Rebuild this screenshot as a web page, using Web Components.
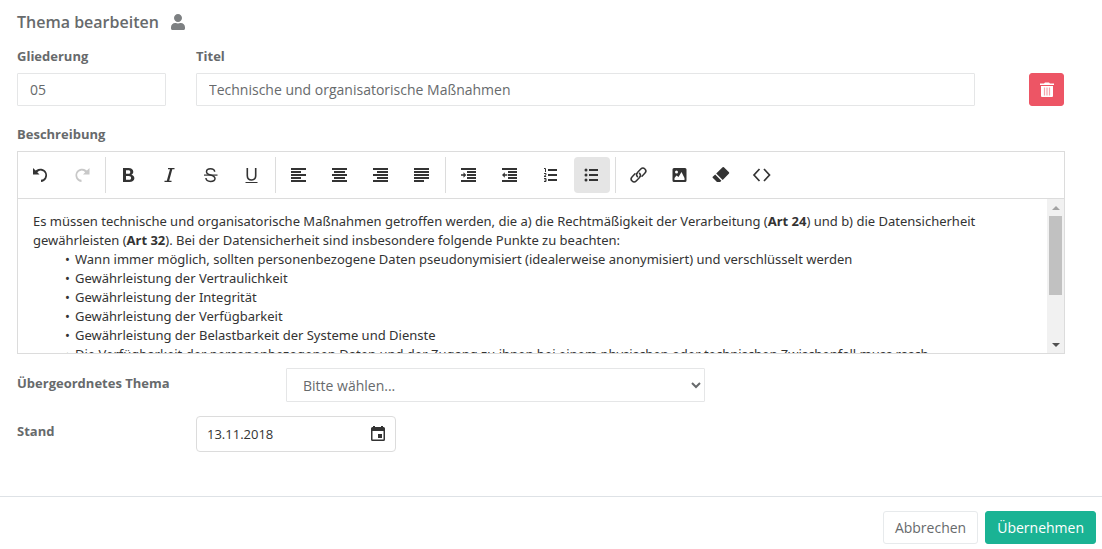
<!DOCTYPE html>
<html lang="de">
<head>
<meta charset="utf-8">
<title>Thema bearbeiten</title>
<style>
  body { margin: 0; background: #fff; color: #676a6c; font-family: "Open Sans", sans-serif; font-size: 14px; line-height: 20px; }
</style>
</head>
<body>
<topic-dialog></topic-dialog>

<script>
const define = (name, html, setup) => customElements.define(name, class extends HTMLElement {
  constructor() {
    super();
    const t = document.createElement('template');
    t.innerHTML = '<style>*{box-sizing:border-box}</style>' + html;
    this.attachShadow({ mode: 'open' }).append(t.content.cloneNode(true));
  }
  connectedCallback() { if (setup) setup(this, this.shadowRoot); }
});

const ICONS = {
  user: ['0 0 448 512', '<path d="M224 256c70.7 0 128-57.3 128-128S294.7 0 224 0 96 57.3 96 128s57.3 128 128 128zm89.600 32h-16.700c-22.200 10.200-46.900 16-72.900 16s-50.600-5.800-72.900-16h-16.700C60.200 288 0 348.200 0 422.400V464c0 26.500 21.500 48 48 48h352c26.500 0 48-21.500 48-48v-41.600c0-74.200-60.200-134.400-134.400-134.400z"/>'],
  trash: ['0 0 16 16', '<path fill-rule="evenodd" d="M6 .5h4l1 1h4V3H1V1.500h4zM2 4h12v10a1 1 0 0 1-1 1H3a1 1 0 0 1-1-1z"/><path d="M5.500 5.500v8M8 5.500v8M10.500 5.500v8" stroke="#f5a3ab" stroke-width="1.200"/>'],
  undo: ['0 0 16 16', '<path d="M0 1v6.500h6.500L4.300 5.300A4.600 4.600 0 1 1 8 12.800V15A6.700 6.700 0 1 0 2.600 3.600z"/>'],
  redo: ['0 0 16 16', '<path d="M15.500 1v6.500H9l2.200-2.200a4.600 4.600 0 1 0-3.700 7.500V15a6.700 6.700 0 1 1 5.400-11.400z"/>'],
  bold: ['0 0 16 16', '<path fill-rule="evenodd" d="M2 1h5.500C10.400 1 12.300 2.500 12.300 4.700c0 1.400-.7 2.500-1.900 3 1.700.5 3 1.700 3 3.500C13.400 13.600 11.300 15 8.300 15H2zM5 3.200v3.600h2.300c1.300 0 2-.7 2-1.900s-.8-1.700-2-1.700zM5 9v3.800h2.800c1.500 0 2.300-.7 2.300-1.900S9.200 9 7.800 9z"/>'],
  italic: ['0 0 16 16', '<path d="M6 1h6.500v1.200h-2.200L7.200 13.800h2.300V15H2.500v-1.200h2.300L8 2.200H6z"/>'],
  strike: ['0 0 16 16', '<path d="M11.700 4.800c-.2-2-1.700-3.100-4.200-3.100s-4 1.100-4 3C3.500 6.500 4.900 7.300 7.500 8c2.900.8 4.500 1.600 4.500 3.500s-1.700 2.900-4.500 2.900-4.400-1.300-4.600-3.400" fill="none" stroke="currentColor" stroke-width="1.500"/><path d="M1 7.500h13.500v1.200H1z"/>'],
  underline: ['0 0 16 16', '<path d="M2.500 1h1.600v7.500c0 2.500 1.200 3.700 3.400 3.700s3.400-1.200 3.400-3.700V1h1.600v7.700c0 3.200-1.900 5-5 5s-5-1.800-5-5zM1.500 15h12v1h-12z"/>'],
  left: ['0 0 16 16', '<path d="M0 1h15v2H0zM0 4h10v2H0zM0 7h15v2H0zM0 10h10v2H0zM0 13h15v2H0z"/>'],
  center: ['0 0 16 16', '<path d="M0 1h15v2H0zM2 4h11v2H2zM0 7h15v2H0zM2 10h11v2H2zM0 13h15v2H0z"/>'],
  right: ['0 0 16 16', '<path d="M0 1h15v2H0zM4 4h11v2H4zM0 7h15v2H0zM4 10h11v2H4zM0 13h15v2H0z"/>'],
  justify: ['0 0 16 16', '<path d="M0 1h15v2H0zM0 4h15v2H0zM0 7h15v2H0zM0 10h15v2H0zM0 13h10v2H0z"/>'],
  indent: ['0 0 16 16', '<path d="M0 1h15v2H0zM6 4h9v2H6zM6 7h9v2H6zM6 10h9v2H6zM0 13h15v2H0zM0 7.200h2.500V5.200L5.300 8l-2.800 2.800V8.800H0z"/>'],
  outdent: ['0 0 16 16', '<path d="M0 1h15v2H0zM6 4h9v2H6zM6 7h9v2H6zM6 10h9v2H6zM0 13h15v2H0zM5.300 7.200H2.800V5.200L0 8l2.800 2.800V8.800h2.500z"/>'],
  ol: ['0 0 16 16', '<path d="M5 2h9v2H5zM5 7h9v2H5zM5 12h9v2H5z"/><path d="M1 1.500h1.500V5M1 6.500h2v1.300l-2 1.700h2.200M1 11.500h2v3H1M1.500 13H3" fill="none" stroke="currentColor"/>'],
  ul: ['0 0 16 16', '<path d="M5 2h9v2H5zM5 7h9v2H5zM5 12h9v2H5z"/><circle cx="2" cy="3" r="1.500"/><circle cx="2" cy="8" r="1.500"/><circle cx="2" cy="13" r="1.500"/>'],
  link: ['0 0 16 16', '<g fill="none" stroke="currentColor" stroke-width="1.500" stroke-linecap="round"><path d="M6.500 9.800C5.100 8.300 5.400 6.700 6.500 5.600l3.300-3.500a2.900 2.900 0 0 1 4.200 4L11 9.200"/><path d="M8.500 6.200c1.400 1.500 1.100 3.100 0 4.200l-3.300 3.500a2.900 2.900 0 0 1-4.200-4L4 6.800"/></g>'],
  image: ['0 0 16 16', '<path fill-rule="evenodd" d="M2 1h11a1.500 1.500 0 0 1 1.500 1.500v11A1.500 1.500 0 0 1 13 15H2a1.500 1.500 0 0 1-1.500-1.500v-11A1.500 1.500 0 0 1 2 1zM4.500 3.500a1.500 1.500 0 1 0 0 3 1.500 1.500 0 0 0 0-3zM2.500 13h10v-2l-3-6-3 5-2-1.500L2.500 11z"/>'],
  eraser: ['0 0 16 16', '<path d="M9.600.2a1 1 0 0 1 1.300 0L16 5.300a1 1 0 0 1 0 1.300L9.700 12.900 3.200 6.400zM2.200 7.500l6.200 6.200L7.100 15H4L-.5 10.500v-.4z"/>'],
  code: ['0 0 16 16', '<path d="M5.500 2L0 8l5.500 6M10 2l5.500 6-5.500 6" fill="none" stroke="currentColor" stroke-width="1.700"/>'],
  calendar: ['0 0 16 16', '<path fill-rule="evenodd" d="M3 0h2v1h6V0h2v1h.5A1.500 1.500 0 0 1 15 2.500v11a1.500 1.500 0 0 1-1.500 1.500h-11A1.500 1.500 0 0 1 1 13.500v-11A1.500 1.500 0 0 1 2.500 1H3zM2.500 5v8.500h11V5zM8 8h4v4H8z"/>']
};

define('ui-icon', `<style>
  :host { display: inline-flex; width: 16px; height: 16px; }
  svg { width: 100%; height: 100%; fill: currentColor; overflow: visible; }
</style><span id="box" style="display:contents"></span>`, (el, root) => {
  const [box, body] = ICONS[el.getAttribute('name')];
  root.getElementById('box').innerHTML = `<svg viewBox="${box}" aria-hidden="true">${body}</svg>`;
});

define('text-field', `<style>
  :host { display: flex; flex-direction: column; gap: 7px; min-width: 0; }
  label { font-size: 13px; font-weight: 700; line-height: 20px; }
  input { width: 100%; height: 33px; padding: 6px 12px; border: 1px solid #e5e6e7; border-radius: 1px; background: #fff; color: inherit; font: inherit; }
</style><label for="field"></label><input id="field" type="text">`, (el, root) => {
  root.querySelector('label').textContent = el.getAttribute('label');
  root.querySelector('input').value = el.getAttribute('value');
});

define('action-button', `<style>
  :host { display: inline-flex; }
  button { display: flex; align-items: center; justify-content: center; width: 100%; height: 33px; padding: 0 11px; border: 1px solid #e7eaec; border-radius: 3px; background: #fff; color: inherit; font: inherit; }
  :host([kind=primary]) button { background: #1ab394; border-color: #1ab394; color: #fff; }
  :host([kind=danger]) button { background: #ed5565; border-color: #ed5565; color: #fff; padding: 0; width: 35px; }
</style><button type="button"><slot></slot></button>`, (el, root) => {
  if (el.title) root.querySelector('button').setAttribute('aria-label', el.title);
});

define('tool-button', `<style>
  :host { display: inline-flex; color: #333; }
  button { display: flex; align-items: center; justify-content: center; width: 36px; height: 36px; padding: 0; border: 0; border-radius: 4px; background: none; color: inherit; }
  :host([active]) button { background: #e5e5e5; }
  :host([off]) { color: #c8c8c8; }
</style><button type="button"></button>`, (el, root) => {
  const b = root.querySelector('button');
  b.setAttribute('aria-label', el.getAttribute('label'));
  b.disabled = el.hasAttribute('off');
  b.innerHTML = `<ui-icon name="${el.getAttribute('icon')}"></ui-icon>`;
});

define('editor-toolbar', `<style>
  :host { display: flex; flex-wrap: wrap; gap: 5px; padding: 5px; border-bottom: 1px solid #dcdcdc; }
  i { width: 1px; height: 36px; background: #dcdcdc; }
</style><slot></slot>`, (el, root) => {
  const groups = [
    [['undo', 'Rückgängig'], ['redo', 'Wiederholen', 'off']],
    [['bold', 'Fett'], ['italic', 'Kursiv'], ['strike', 'Durchgestrichen'], ['underline', 'Unterstrichen']],
    [['left', 'Linksbündig'], ['center', 'Zentriert'], ['right', 'Rechtsbündig'], ['justify', 'Blocksatz']],
    [['indent', 'Einzug vergrößern'], ['outdent', 'Einzug verkleinern'], ['ol', 'Nummerierte Liste'], ['ul', 'Aufzählung', 'active']],
    [['link', 'Link'], ['image', 'Bild'], ['eraser', 'Formatierung entfernen'], ['code', 'Quelltext']]
  ];
  root.querySelector('slot').insertAdjacentHTML('beforebegin', groups.map(g =>
    g.map(([i, l, s = '']) => `<tool-button icon="${i}" label="${l}" ${s}></tool-button>`).join('')).join('<i></i>'));
});

define('scroll-bar', `<style>
  :host { display: flex; flex-direction: column; align-items: center; width: 17px; background: #f1f1f1; }
  b { display: grid; place-items: center; width: 17px; height: 17px; }
  b::after { content: ""; border: 4px solid transparent; border-top-width: 0; border-bottom-color: #a3a3a3; }
  b.down::after { border-top: 4px solid #505050; border-bottom-width: 0; }
  .track { flex: 1; width: 13px; }
  .thumb { height: 66%; background: #c1c1c1; }
</style><b></b><div class="track"><div class="thumb"></div></div><b class="down"></b>`);

define('rich-editor', `<style>
  :host { display: block; border: 1px solid #dcdcdc; color: #333; }
  .view { display: flex; height: 154px; }
  .text { flex: 1; min-width: 0; overflow: hidden; padding: 13px 15px 0; font-family: "Noto Sans", sans-serif; font-size: 13px; line-height: 19px; outline: 0; }
</style><editor-toolbar></editor-toolbar>
<div class="view"><div class="text" contenteditable="true" role="textbox" aria-label="Beschreibung" spellcheck="false"><topic-text></topic-text></div><scroll-bar></scroll-bar></div>`);

define('topic-text', `<style>
  :host { display: block; }
  p { margin: 0; }
  ul { margin: 0; padding: 0 0 0 32px; list-style: none; }
  li { display: flex; }
  li::before { content: "•"; flex: none; width: 10px; }
</style>
<p>Es müssen technische und organisatorische Maßnahmen getroffen werden, die a) die Rechtmäßigkeit der Verarbeitung (<strong>Art 24</strong>) und b) die Datensicherheit gewährleisten (<strong>Art 32</strong>). Bei der Datensicherheit sind insbesondere folgende Punkte zu beachten:</p>
<ul>
<li>Wann immer möglich, sollten personenbezogene Daten pseudonymisiert (idealerweise anonymisiert) und verschlüsselt werden</li>
<li>Gewährleistung der Vertraulichkeit</li>
<li>Gewährleistung der Integrität</li>
<li>Gewährleistung der Verfügbarkeit</li>
<li>Gewährleistung der Belastbarkeit der Systeme und Dienste</li>
<li>Die Verfügbarkeit der personenbezogenen Daten und der Zugang zu ihnen bei einem physischen oder technischen Zwischenfall muss rasch</li>
</ul>`);

define('parent-select', `<style>
  :host { display: grid; grid-template-columns: 269px 40%; align-items: start; }
  label { padding-top: 5px; font-size: 13px; font-weight: 700; }
  select { width: 100%; height: 34px; padding: 0 0 0 12px; border: 1px solid #e5e6e7; border-radius: 1px; background: #fff; color: inherit; font: inherit; }
</style><label for="s">Übergeordnetes Thema</label><select id="s"><option>Bitte wählen...</option></select>`);

define('date-field', `<style>
  :host { display: grid; grid-template-columns: 179px 200px; align-items: start; }
  label { padding-top: 5px; font-size: 13px; font-weight: 700; }
  div { display: flex; height: 36px; border: 1px solid #dcdcdc; border-radius: 4px; color: #333; }
  input { flex: 1; min-width: 0; padding: 0 10px; border: 0; background: none; color: inherit; font: inherit; font-size: 13px; }
  button { display: grid; place-items: center; width: 34px; padding: 0; border: 0; background: none; color: inherit; }
</style><label for="d">Stand</label><div><input id="d" type="text" value="13.11.2018"><button type="button" aria-label="Kalender öffnen"><ui-icon name="calendar"></ui-icon></button></div>`);

define('topic-dialog', `<style>
  :host { display: block; }
  main { display: flex; flex-direction: column; padding: 12px 37px 44px 17px; }
  h1 { display: flex; align-items: center; gap: 11px; margin: 0 0 14px; font-size: 16px; font-weight: 600; line-height: 20px; }
  h1 ui-icon { color: #7d8082; }
  .head { display: grid; grid-template-columns: 149px 1fr 36px; column-gap: 30px; align-items: end; margin-bottom: 18px; }
  .title { margin-right: 24px; }
  .caption { margin-bottom: 7px; font-size: 13px; font-weight: 700; }
  rich-editor { margin-bottom: 14px; }
  parent-select { margin-bottom: 14px; }
  footer { display: flex; justify-content: flex-end; gap: 7px; padding: 14px 6px 5px; border-top: 1px solid #dee2e6; }
</style>
<main>
  <h1>Thema bearbeiten <ui-icon name="user"></ui-icon></h1>
  <div class="head">
    <text-field label="Gliederung" value="05"></text-field>
    <text-field class="title" label="Titel" value="Technische und organisatorische Maßnahmen"></text-field>
    <action-button kind="danger" title="Löschen"><ui-icon name="trash"></ui-icon></action-button>
  </div>
  <div class="caption">Beschreibung</div>
  <rich-editor></rich-editor>
  <parent-select></parent-select>
  <date-field></date-field>
</main>
<footer>
  <action-button>Abbrechen</action-button>
  <action-button kind="primary">Übernehmen</action-button>
</footer>`);
</script>
</body>
</html>
